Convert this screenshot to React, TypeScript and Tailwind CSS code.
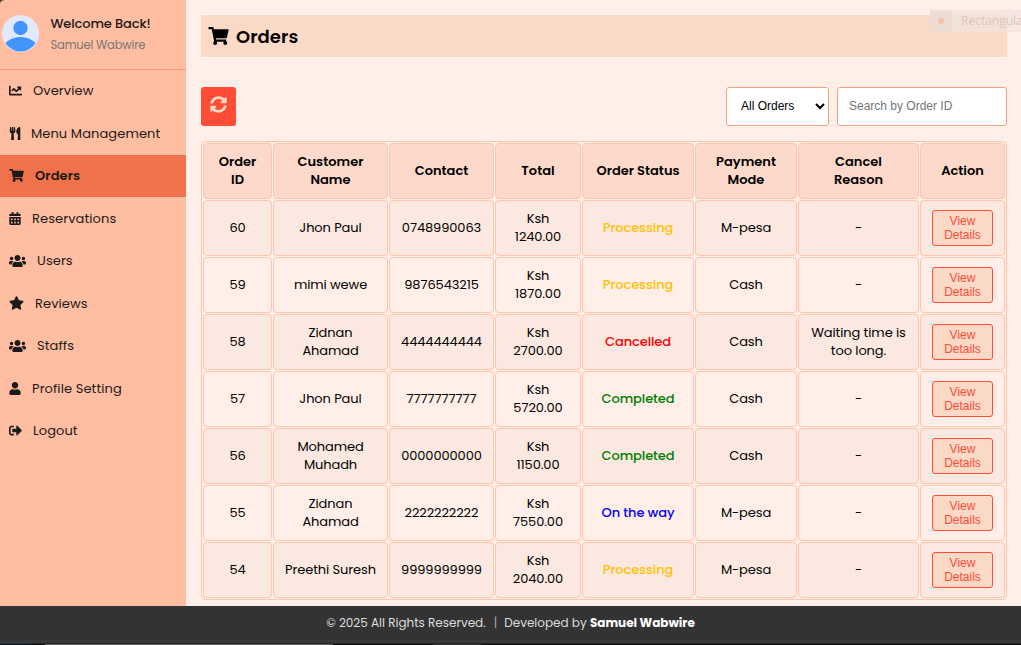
import React from "react";
import {
  FaCalendarAlt, FaChartLine, FaShoppingCart, FaSignOutAlt, FaStar, FaSyncAlt, FaUser, FaUsers, FaUtensils,
} from "react-icons/fa";

const menu = [
  { label: "Overview", icon: <FaChartLine className="h-[13px] w-[13px]" />, gap: "ml-[11px] tracking-[0.1px]" },
  { label: "Menu Management", icon: <FaUtensils className="h-[13px] w-[12px]" />, gap: "ml-[10px] tracking-[0.1px]" },
  { label: "Orders", icon: <FaShoppingCart className="h-[13px] w-[15px]" />, gap: "ml-[11px] font-semibold tracking-[0.1px]", active: true },
  { label: "Reservations", icon: <FaCalendarAlt className="h-[13px] w-[12px]" />, gap: "ml-[11px] tracking-[0.1px]" },
  { label: "Users", icon: <FaUsers className="h-[14px] w-[17px]" />, gap: "ml-[11px] tracking-[0.1px]" },
  { label: "Reviews", icon: <FaStar className="h-[14px] w-[15px]" />, gap: "ml-[11px] tracking-[0.1px]" },
  { label: "Staffs", icon: <FaUsers className="h-[14px] w-[17px]" />, gap: "ml-[11px] tracking-[0.1px]" },
  { label: "Profile Setting", icon: <FaUser className="h-[13px] w-[12px]" />, gap: "ml-[11px] tracking-[0.1px]" },
  { label: "Logout", icon: <FaSignOutAlt className="h-[13px] w-[13px]" />, gap: "ml-[11px] tracking-[0.1px]" },
];

const columns = [
  ["Order", "ID"], ["Customer", "Name"], ["Contact"], ["Total"],
  ["Order Status"], ["Payment", "Mode"], ["Cancel", "Reason"], ["Action"],
];

const statusColor: Record<string, string> = {
  Processing: "text-[#ffc107]",
  Cancelled: "text-[#ff0000]",
  Completed: "text-[#008000]",
  "On the way": "text-[#0000ff]",
};

const orders = [
  { id: "60", name: ["Jhon Paul"], contact: "0748990063", total: "1240.00", status: "Processing", pay: "M-pesa", reason: ["-"] },
  { id: "59", name: ["mimi wewe"], contact: "9876543215", total: "1870.00", status: "Processing", pay: "Cash", reason: ["-"] },
  { id: "58", name: ["Zidnan", "Ahamad"], contact: "4444444444", total: "2700.00", status: "Cancelled", pay: "Cash", reason: ["Waiting time is", "too long."] },
  { id: "57", name: ["Jhon Paul"], contact: "7777777777", total: "5720.00", status: "Completed", pay: "Cash", reason: ["-"] },
  { id: "56", name: ["Mohamed", "Muhadh"], contact: "0000000000", total: "1150.00", status: "Completed", pay: "Cash", reason: ["-"] },
  { id: "55", name: ["Zidnan", "Ahamad"], contact: "2222222222", total: "7550.00", status: "On the way", pay: "M-pesa", reason: ["-"] },
  { id: "54", name: ["Preethi Suresh"], contact: "9999999999", total: "2040.00", status: "Processing", pay: "M-pesa", reason: ["-"] },
];

function Lines({ text }: { text: string[] }) {
  return <>{text.map((t) => <span key={t} className="block whitespace-nowrap">{t}</span>)}</>;
}

function Cell({ children, className = "" }: { children: React.ReactNode; className?: string }) {
  return (
    <td className={`h-14 rounded-[4px] border border-[#ffc5ad] p-0 text-center align-middle ${className}`}>
      {children}
    </td>
  );
}

export default function App() {
  return (
    <div className="relative flex h-[645px] w-[1021px] flex-col overflow-hidden bg-[#ffefe8] font-[Poppins,Inter,sans-serif] text-[13px] text-black">
      <div className="flex h-[606px] shrink-0">
        <aside className="w-[186px] shrink-0 bg-[#ffbda1] text-[#1c1a1a]">
          <div className="flex h-[69.5px] items-center border-b border-[#f8957a] pl-[2px]">
            <svg viewBox="0 0 38 38" className="h-[38px] w-[38px]">
              <defs><clipPath id="avatar"><circle cx="18.5" cy="19" r="17.5" /></clipPath></defs>
              <circle cx="18.5" cy="18.7" r="18.5" fill="#e3e9fd" />
              <g clipPath="url(#avatar)" fill="#4294ff">
                <circle cx="18.5" cy="13" r="7.2" />
                <ellipse cx="18.5" cy="34" rx="17" ry="12" />
              </g>
            </svg>
            <div className="mb-[1.5px] ml-[10.5px] whitespace-nowrap">
              <div className="text-[13px] leading-[22px] font-medium tracking-[-0.12px]">Welcome Back!</div>
              <div className="text-[11.5px] leading-[20px] tracking-[-0.17px] text-[#777]">Samuel Wabwire</div>
            </div>
          </div>
          <nav>
            {menu.map((m) => (
              <div key={m.label} className={`flex h-[42.5px] items-center pl-[9px] whitespace-nowrap ${m.active ? "bg-[#f0724b]" : ""}`}>
                {m.icon}
                <span className={m.gap}>{m.label}</span>
              </div>
            ))}
          </nav>
        </aside>

        <main className="w-[835px] pt-[15px] pr-[14px] pl-[15px]">
          <h1 className="flex h-[42px] items-center bg-[#fbd9c7] pl-[7px] text-[18px] font-semibold">
            <FaShoppingCart className="h-[18px] w-[21px]" />
            <span className="ml-[7px] tracking-[0.08px]">Orders</span>
          </h1>
          <div className="mt-[30px] flex h-[39px] items-center font-['Liberation_Sans',sans-serif] text-[12px]">
            <button className="flex h-[39px] w-[35px] items-center justify-center rounded-[3px] bg-[#ff4c37] text-[#ffd9c4]">
              <FaSyncAlt className="mb-1 h-[17px] w-[17px]" />
            </button>
            <div className="ml-auto flex h-[39px] w-[103px] items-center justify-between rounded-[3px] border border-[#f6a27f] bg-white pr-[3px] pb-[2px] pl-[14px]">
              <span>All Orders</span>
              <svg viewBox="0 0 10 8" className="h-2 w-[10px]" fill="none" stroke="black" strokeWidth="2"><path d="M1 2l4 4 4-4" /></svg>
            </div>
            <input placeholder="Search by Order ID" className="ml-2 h-[39px] w-[170px] rounded-[3px] border border-[#f6a27f] bg-white pb-[2px] pl-[11px] placeholder:text-[#757575]" />
          </div>

          <table className="mt-[15px] h-[459px] w-[806px] table-fixed border-separate border-spacing-px rounded-[4px] border border-[#ffc5ad] leading-[18px] tracking-[-0.1px]">
            <colgroup>
              <col className="w-[69px]" /><col className="w-[115px]" /><col className="w-[105px]" /><col className="w-[86px]" />
              <col className="w-[112px]" /><col className="w-[102px]" /><col className="w-[121px]" /><col className="w-[85px]" />
            </colgroup>
            <thead>
              <tr>
                {columns.map((c) => (
                  <th key={c[0]} className="h-14 rounded-[4px] border border-[#ffc5ad] bg-[#fcd9ca] p-0 text-center align-middle font-semibold tracking-normal">
                    <Lines text={c} />
                  </th>
                ))}
              </tr>
            </thead>
            <tbody>
              {orders.map((o) => (
                <tr key={o.id} className="odd:[&>td]:bg-[#fbe9e1]">
                  <Cell>{o.id}</Cell>
                  <Cell><Lines text={o.name} /></Cell>
                  <Cell>{o.contact}</Cell>
                  <Cell><Lines text={["Ksh", o.total]} /></Cell>
                  <Cell className={`font-medium ${statusColor[o.status]}`}>{o.status}</Cell>
                  <Cell>{o.pay}</Cell>
                  <Cell><Lines text={o.reason} /></Cell>
                  <Cell>
                    <button className="mx-auto block h-9 w-[61px] rounded-[3px] border border-[#ff4c37] bg-[#fbd9c7] font-['Liberation_Sans',sans-serif] text-[12px] leading-[14px] tracking-normal text-[#ff4c37]">
                      View<br />Details
                    </button>
                  </Cell>
                </tr>
              ))}
            </tbody>
          </table>
        </main>
      </div>
      <footer className="flex h-[34px] shrink-0 items-start justify-center bg-[#333] pt-[8px] text-[12px] leading-[18px] text-[#ddd]">
        © 2025 All Rights Reserved.<span className="mr-[7px] ml-2 text-[#aaa]">|</span>Developed by&nbsp;<b className="tracking-[-0.02px] text-white">Samuel Wabwire</b>
      </footer>
      <div className="h-[3px] shrink-0 bg-[#393939]" />
      <div className="flex h-px shrink-0 bg-[#252525]"><span className="w-[31px] bg-[#1d3b4c]" /></div>
      <div className="flex h-px shrink-0 bg-[#0e0e0e]">
        <span className="ml-[45px] w-[288px] bg-[#626262]" />
        <span className="ml-[100px] w-[48px] bg-[#333]" />
      </div>
      <svg viewBox="0 0 5 3" className="absolute top-0 left-0 h-[3px] w-[5px]"><path d="M0 0h5Q1.500 0 0 3z" fill="#4a3a36" /></svg>
      <div className="absolute top-[10px] left-[930px] flex h-[22px] w-[91px] items-center overflow-hidden bg-[#f0e4de]/70 font-['Open_Sans',sans-serif] text-[12px] whitespace-nowrap text-[#dfc5bb]">
        <span className="flex h-full w-[22px] shrink-0 items-center justify-center bg-[#e8d8d0]/60"><i className="h-[6px] w-[6px] rounded-full bg-[#f3c1ac]" /></span>
        <span className="ml-[9px]">Rectangular</span>
      </div>
    </div>
  );
}
